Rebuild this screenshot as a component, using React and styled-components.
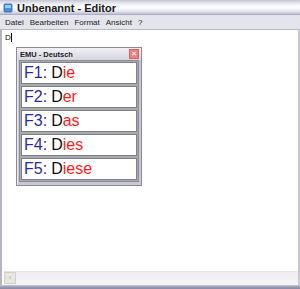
import React from "react";
import styled, { createGlobalStyle } from "styled-components";

const Global = createGlobalStyle`
  html, body { margin: 0; padding: 0; background: #fff; }
  body { font-family: "Liberation Sans", Arial, sans-serif; }
`;

const Window = styled.div`
  width: 300px;
  height: 289px;
  display: flex;
  flex-direction: column;
  box-sizing: border-box;
  background: #fff;
  overflow: hidden;
`;

const TitleBar = styled.div`
  height: 15px;
  flex-shrink: 0;
  display: flex;
  align-items: center;
  gap: 4px;
  padding-left: 3px;
  background: linear-gradient(
    to bottom,
    #c4c4d4 0px,
    #e6e6ee 3px,
    #ffffff 7px,
    #e8e8f0 11px,
    #c0c0d2 14px,
    #9a9ab4 15px
  );
`;

const Title = styled.span`
  font-family: "Liberation Sans", Arial, sans-serif;
  font-weight: bold;
  font-size: 11px;
  color: #202020;
`;

const MenuBar = styled.div`
  height: 14px;
  flex-shrink: 0;
  display: flex;
  align-items: center;
  gap: 6px;
  padding-left: 5px;
  background: #e4e4ec;
  border-bottom: 1px solid #b8b8c8;
  font-family: "Liberation Sans", Arial, sans-serif;
  font-size: 8px;
  color: #222;
`;

const Body = styled.div`
  flex: 1;
  display: flex;
  flex-direction: column;
  border-left: 2px solid #b4b4c4;
  border-right: 2px solid #c8c8d4;
`;

const Editor = styled.div`
  flex: 1;
  padding: 3px 0 0 3px;
  font-family: "Liberation Sans", Arial, sans-serif;
  font-size: 8px;
  color: #111;
`;

const Caret = styled.span`
  display: inline-block;
  width: 1px;
  height: 9px;
  background: #000;
  vertical-align: -2px;
`;

const Popup = styled.div`
  width: 126px;
  margin: 5px 0 0 11px;
  background: #c8c8d0;
  border: 1px solid #8a8a9a;
  box-sizing: border-box;
  padding: 0 2px 3px 2px;
  box-shadow: inset 1px 1px 0 #e8e8ee;
`;

const PopupTitle = styled.div`
  height: 12px;
  display: flex;
  align-items: center;
  justify-content: space-between;
  margin: 0 -2px 0 -2px;
  padding: 0 2px 0 3px;
  background: linear-gradient(to bottom, #f0f0f4, #d6d6e0);
  font-family: "Liberation Sans", Arial, sans-serif;
  font-weight: bold;
  font-size: 7.5px;
  color: #222;
`;

const Close = styled.span`
  width: 8px;
  height: 8px;
  background: #f08080;
  border: 1px solid #e06060;
  color: #fff;
  font-size: 8px;
  line-height: 8px;
  text-align: center;
  font-weight: bold;
`;

const List = styled.div`
  display: flex;
  flex-direction: column;
  gap: 2px;
  border: 1px solid #8e8e9a;
  padding: 1px;
  background: #a8a8b0;
`;

const Row = styled.div`
  height: 20px;
  background: #fff;
  border: 1px solid #808088;
  display: flex;
  align-items: center;
  padding-left: 2px;
  font-family: "Liberation Sans", Arial, sans-serif;
  font-size: 16px;
  line-height: 1;
`;

const Key = styled.span`
  color: #2a2a9c;
  margin-right: 4px;
`;

const First = styled.span`
  color: #111;
`;

const Rest = styled.span`
  color: #ff1a1a;
`;

const ScrollBar = styled.div`
  height: 13px;
  flex-shrink: 0;
  display: flex;
  background: linear-gradient(to bottom, #ececf2, #f6f6f8);
  border-top: 1px solid #e4e4ea;
  margin-left: 2px;
`;

const Arrow = styled.div`
  width: 12px;
  height: 12px;
  background: #e6e8e0;
  border: 1px solid #d0d2c8;
  box-sizing: border-box;
  color: #b0b4a8;
  font-size: 8px;
  line-height: 10px;
  text-align: center;
`;

const BottomBorder = styled.div`
  height: 4px;
  flex-shrink: 0;
  background: linear-gradient(to bottom, #c8c8d6, #9c9cb4 50%, #8888a4);
`;

const Icon = () => (
  <svg width="10" height="10" viewBox="0 0 10 10">
    <rect x="1" y="1" width="8" height="8" rx="1" fill="#4a90d8" />
    <rect x="2" y="2" width="6" height="3" fill="#9ccbf4" />
    <rect x="1" y="1" width="8" height="8" rx="1" fill="none" stroke="#2a60a8" strokeWidth="0.8" />
  </svg>
);

const words = [
  ["F1:", "D", "ie"],
  ["F2:", "D", "er"],
  ["F3:", "D", "as"],
  ["F4:", "D", "ies"],
  ["F5:", "D", "iese"],
];

export default function App() {
  return (
    <Window>
      <Global />
      <TitleBar>
        <Icon />
        <Title>Unbenannt - Editor</Title>
      </TitleBar>
      <MenuBar>
        <span>Datei</span>
        <span>Bearbeiten</span>
        <span>Format</span>
        <span>Ansicht</span>
        <span>?</span>
      </MenuBar>
      <Body>
        <Editor>
          D<Caret />
          <Popup>
            <PopupTitle>
              <span>EMU - Deutsch</span>
              <Close>×</Close>
            </PopupTitle>
            <List>
              {words.map(([k, f, r]) => (
                <Row key={k}>
                  <Key>{k}</Key>
                  <First>{f}</First>
                  <Rest>{r}</Rest>
                </Row>
              ))}
            </List>
          </Popup>
        </Editor>
        <ScrollBar>
          <Arrow>‹</Arrow>
        </ScrollBar>
      </Body>
      <BottomBorder />
    </Window>
  );
}
